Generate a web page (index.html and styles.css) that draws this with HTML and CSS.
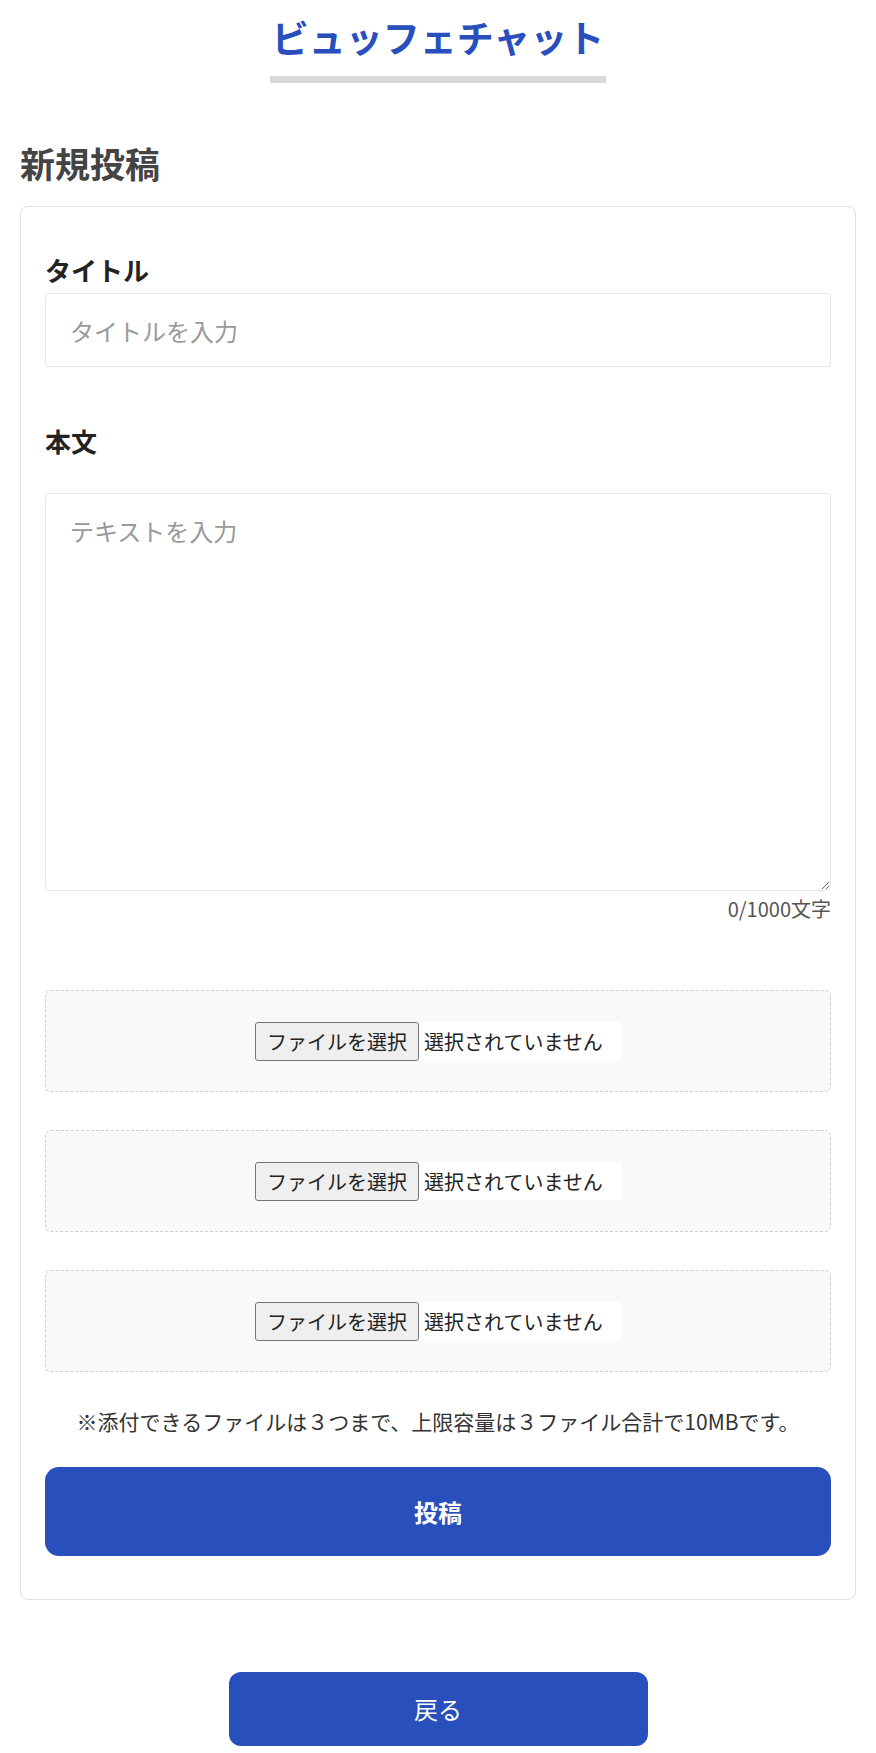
FILE: index.html
```html
<!DOCTYPE html>
<html lang="ja">
<head>
  <meta charset="UTF-8">
  <meta name="viewport" content="width=device-width, initial-scale=1.0">
  <title>ビュッフェチャット - 新規投稿</title>
  <link rel="stylesheet" href="styles.css">
</head>
<body>
  <header class="site-header">
    <h1 class="site-title">ビュッフェチャット</h1>
  </header>

  <main class="page">
    <h2 class="page-title">新規投稿</h2>

    <form class="post-card" action="#" method="post">
      <div class="field">
        <label class="field-label" for="title">タイトル</label>
        <input class="text-input" type="text" id="title" name="title" placeholder="タイトルを入力">
      </div>

      <div class="field field-body">
        <label class="field-label" for="body">本文</label>
        <textarea class="text-area" id="body" name="body" placeholder="テキストを入力" maxlength="1000"></textarea>
        <div class="char-count"><span id="count">0</span>/1000文字</div>
      </div>

      <div class="attachments">
        <div class="file-box">
          <label class="file-picker">
            <input type="file" name="file1">
            <span class="file-btn">ファイルを選択</span>
            <span class="file-name">選択されていません</span>
          </label>
        </div>
        <div class="file-box">
          <label class="file-picker">
            <input type="file" name="file2">
            <span class="file-btn">ファイルを選択</span>
            <span class="file-name">選択されていません</span>
          </label>
        </div>
        <div class="file-box">
          <label class="file-picker">
            <input type="file" name="file3">
            <span class="file-btn">ファイルを選択</span>
            <span class="file-name">選択されていません</span>
          </label>
        </div>
      </div>

      <p class="note">※添付できるファイルは３つまで、上限容量は３ファイル合計で10MBです。</p>

      <button class="submit-btn" type="submit">投稿</button>
    </form>

    <div class="back">
      <a class="back-btn" href="#">戻る</a>
    </div>
  </main>

  <script>
    // 文字数カウント
    const body = document.getElementById("body");
    body.addEventListener("input", function() {
      document.getElementById("count").innerText = body.value.length;
    });

    // 選択したファイル名を表示
    document.querySelectorAll(".file-picker input").forEach(function(input) {
      input.addEventListener("change", function() {
        const name = input.files.length ? input.files[0].name : "選択されていません";
        input.parentNode.querySelector(".file-name").innerText = name;
      });
    });
  </script>
</body>
</html>
```

FILE: styles.css
```css
body {
  margin: 0;
  padding: 0 20px;
  background-color: white;
  color: #222;
  font-family: "Noto Sans CJK JP", "Noto Sans", sans-serif;
}
.site-header {
  text-align: center;
  padding-top: 12px;
}
.site-title {
  display: inline-block;
  margin: 0;
  padding: 0 2px 14px;
  font-size: 37px;
  line-height: 50px;
  color: #284fbb;
  border-bottom: 7px solid #d9d9d9;
}
.page-title {
  margin: 56px 0 19px;
  font-size: 35px;
  line-height: 48px;
  color: #444;
}
.post-card {
  border: 1px solid #e0e0e0;
  border-radius: 8px;
  padding: 46px 24px 43px;
}
.field-label {
  display: block;
  font-size: 26px;
  font-weight: bold;
  line-height: 34px;
  margin-bottom: 6px;
}
.text-input,
.text-area {
  display: block;
  width: 100%;
  box-sizing: border-box;
  border: 1px solid #e6e6e6;
  border-radius: 4px;
  font-family: inherit;
  font-size: 24px;
  color: #222;
  padding: 0 24px;
}
.text-input {
  height: 74px;
}
.text-area {
  height: 398px;
  padding-top: 19px;
  resize: vertical;
}
.text-input::placeholder,
.text-area::placeholder {
  color: #999;
}
.field-body {
  margin-top: 57px;
}
.field-body .field-label {
  margin-bottom: 35px;
}
.char-count {
  text-align: right;
  font-size: 20px;
  line-height: 28px;
  color: #555;
  margin-top: 4px;
}
.attachments {
  display: flex;
  flex-direction: column;
  gap: 38px;
  margin-top: 67px;
}
.file-box {
  height: 102px;
  box-sizing: border-box;
  display: flex;
  align-items: center;
  justify-content: center;
  background-color: #f9f9f9;
  border: 1px dashed #d0d0d0;
  border-radius: 6px;
}
.file-picker {
  display: flex;
  align-items: center;
  background-color: white;
  font-size: 20px;
  color: #222;
  cursor: pointer;
  width: 366px;
}
.file-picker input {
  display: none;
}
.file-btn {
  background-color: #efefef;
  border: 1px solid #767676;
  border-radius: 3px;
  padding: 0 11px;
  line-height: 37px;
  margin-right: 5px;
}
.note {
  text-align: center;
  font-size: 21px;
  line-height: 28px;
  color: #333;
  margin: 35px 0 32px;
}
.submit-btn {
  display: block;
  width: 100%;
  height: 89px;
  border: none;
  border-radius: 14px;
  background-color: #284fbb;
  color: white;
  font-family: inherit;
  font-size: 24px;
  font-weight: bold;
  cursor: pointer;
}
.back {
  text-align: center;
  margin-top: 72px;
  padding-bottom: 20px;
}
.back-btn {
  display: inline-block;
  width: 419px;
  height: 74px;
  line-height: 74px;
  border-radius: 12px;
  background-color: #284fbb;
  color: white;
  font-size: 24px;
  text-decoration: none;
}
```
